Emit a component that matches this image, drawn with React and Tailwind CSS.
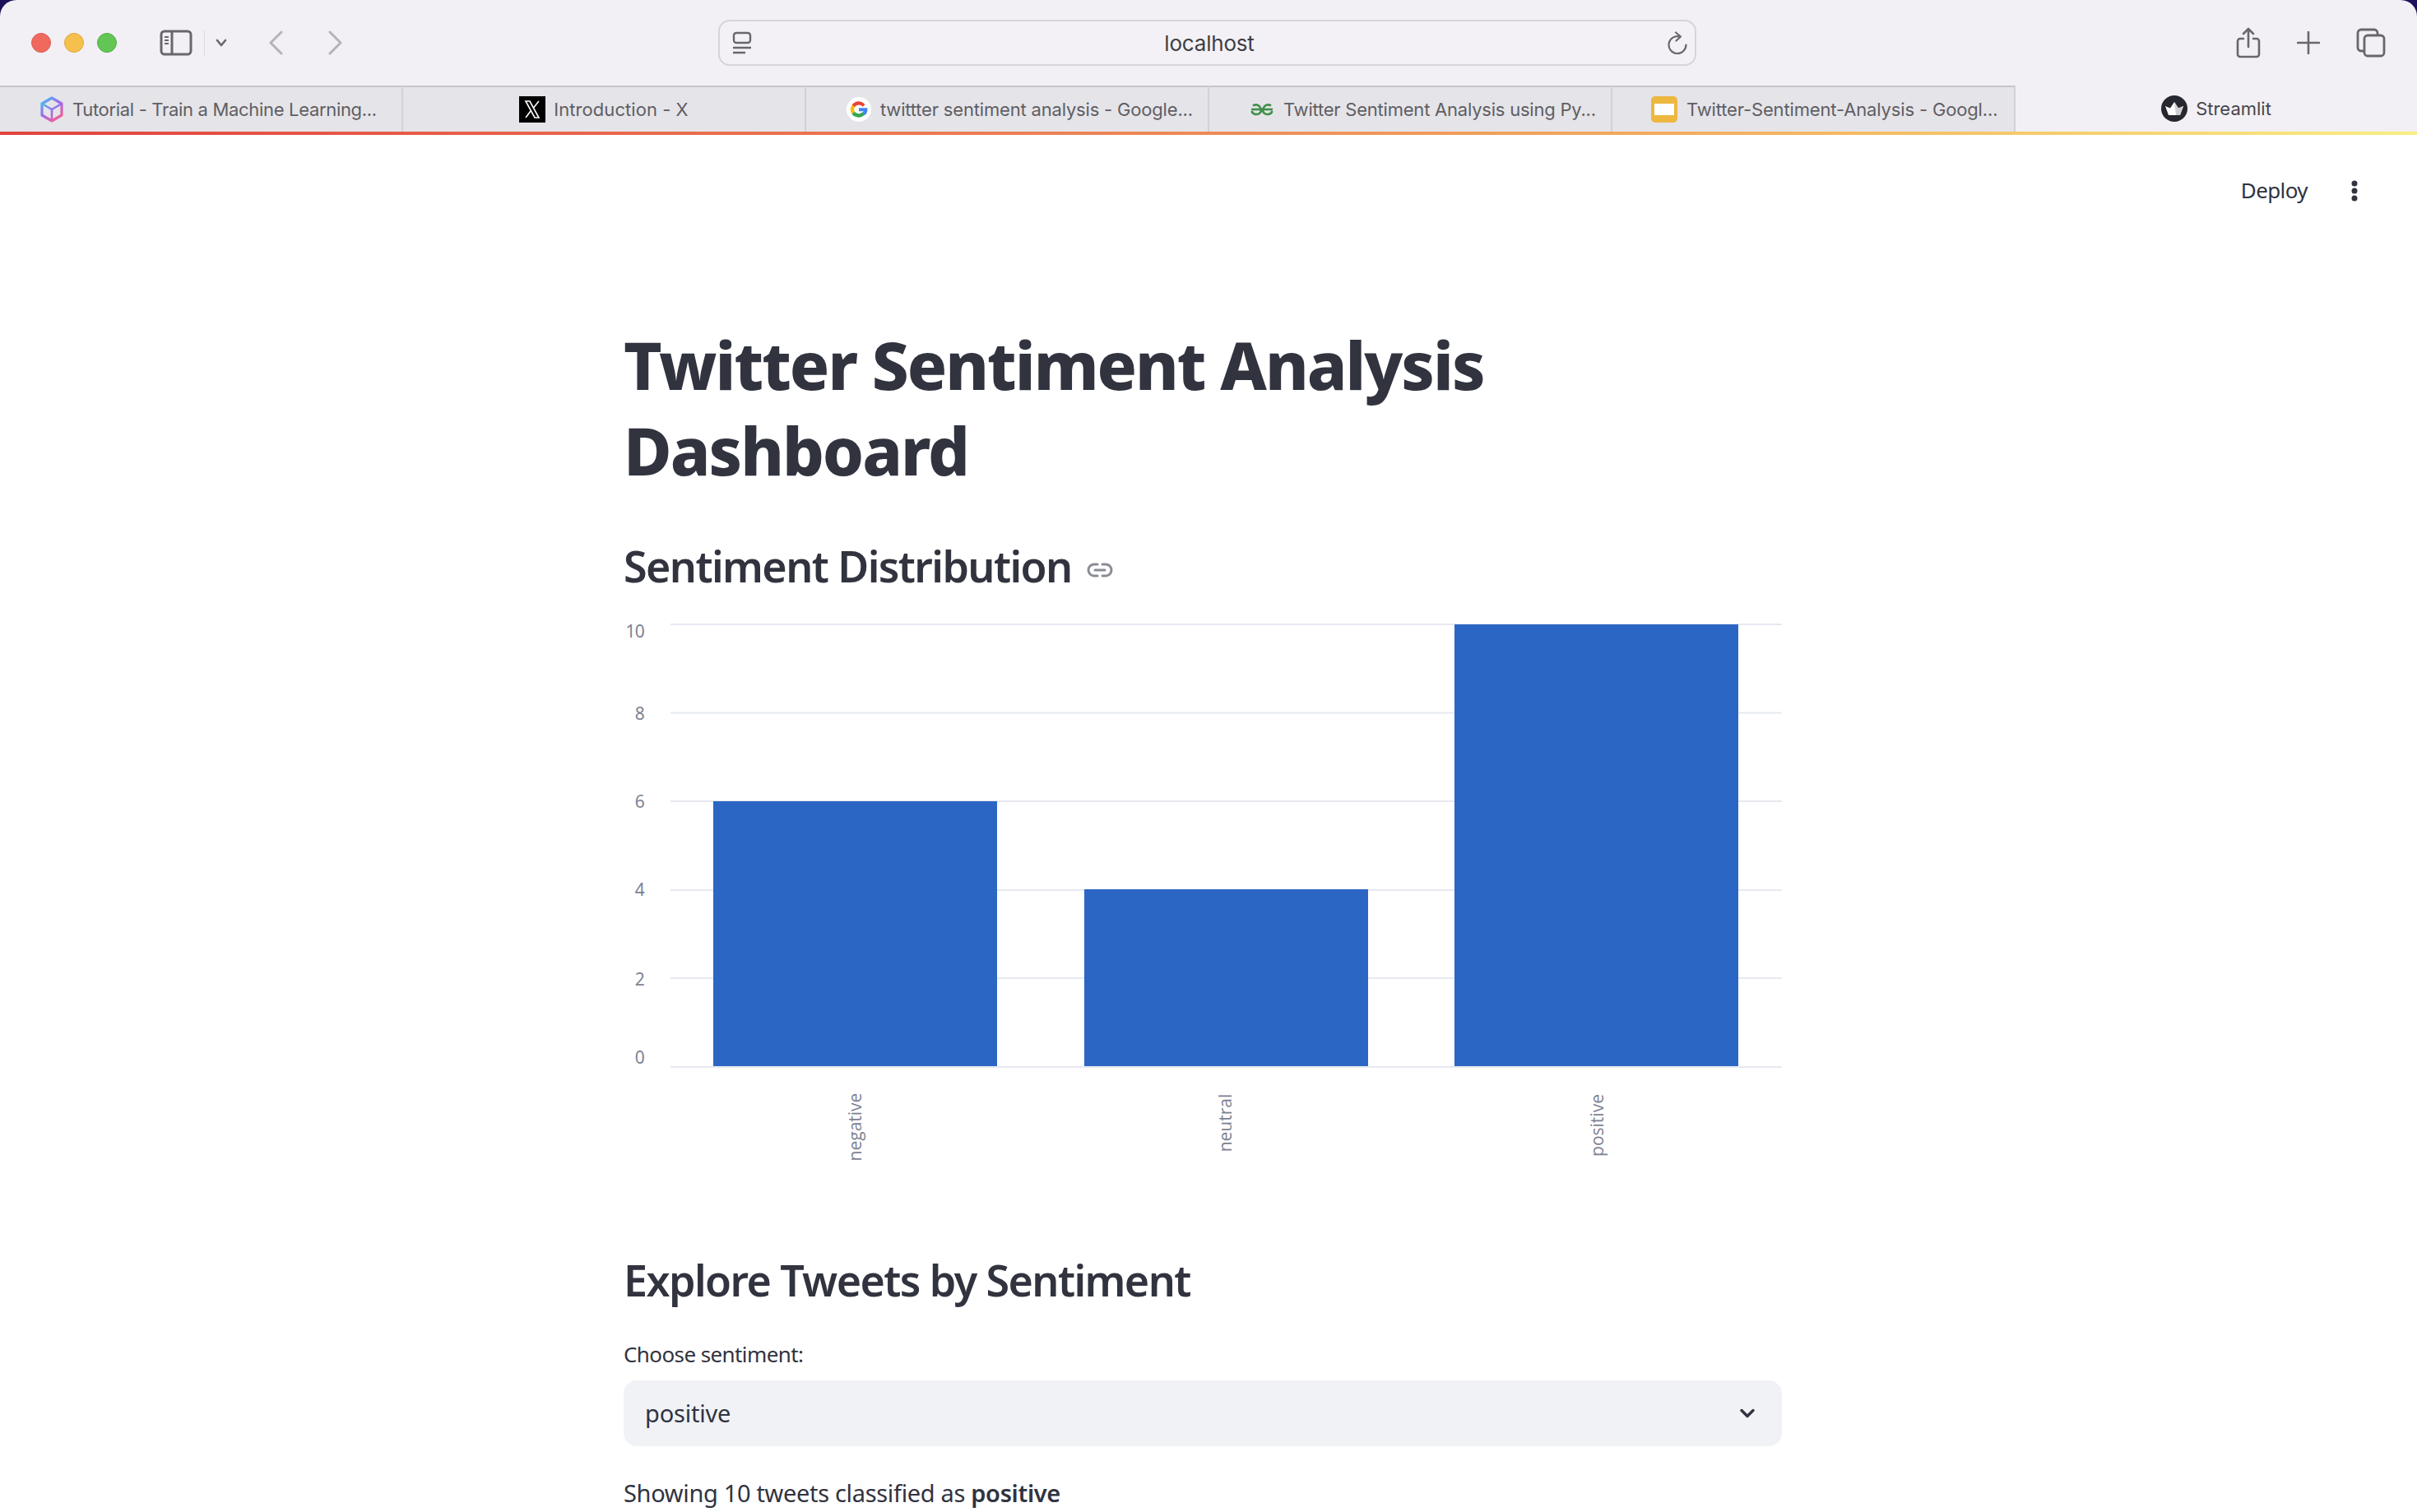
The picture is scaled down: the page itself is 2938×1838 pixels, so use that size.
import { ChevronDown } from 'lucide-react';

const tabs = [
  { title: 'Tutorial - Train a Machine Learning...', icon: 'cube', box: 'justify-start pl-[48px] gap-[10px]', text: 'tracking-[-0.32px]' },
  { title: 'Introduction - X', icon: 'x', box: 'justify-center gap-[10px]', text: 'tracking-[0.05px]' },
  { title: 'twittter sentiment analysis - Google...', icon: 'google', box: 'justify-start pl-[49px] gap-[11px]', text: 'tracking-[-0.18px]' },
  { title: 'Twitter Sentiment Analysis using Py...', icon: 'gfg', box: 'justify-start pl-[49px] gap-[11px]', text: 'tracking-[-0.22px]' },
  { title: 'Twitter-Sentiment-Analysis - Googl...', icon: 'slides', box: 'justify-start pl-[47px] gap-[11px]', text: 'tracking-[-0.15px]' },
];

const Favicon = ({ type }) => {
  if (type === 'cube') {
    return (
      <svg width="30" height="32" viewBox="0 0 30 32" fill="none" strokeWidth="3.200" strokeLinejoin="round">
        <defs>
          <linearGradient id="cubeStroke" x1="0" y1="0" x2="0.7" y2="1">
            <stop offset="0" stopColor="#3fc4ee" />
            <stop offset="0.5" stopColor="#9a6cf0" />
            <stop offset="1" stopColor="#f0609a" />
          </linearGradient>
        </defs>
        <path d="M15 2 27 9v14L15 30 3 23V9Z" stroke="url(#cubeStroke)" />
        <path d="M3 9l12 7 12-7M15 16v14" stroke="url(#cubeStroke)" strokeWidth="2.600" />
      </svg>
    );
  }
  if (type === 'x') {
    return (
      <svg width="32" height="32" viewBox="0 0 32 32">
        <rect width="32" height="32" fill="#000" />
        <path d="M8 6h5l11 20h-5Z" fill="none" stroke="#fff" strokeWidth="1.600" />
        <path d="M24 6 17.500 14M14 18 8 26" stroke="#fff" strokeWidth="1.600" />
      </svg>
    );
  }
  if (type === 'google') {
    return (
      <svg width="30" height="32" viewBox="0 0 32 32">
        <circle cx="16" cy="16" r="16" fill="#fff" />
        <path d="M24 9.500A11 11 0 0 0 7 10l3.500 3A6.500 6.500 0 0 1 21 12.500Z" fill="#ea4335" />
        <path d="M7 10a11 11 0 0 0 0 12l3.500-3a6.500 6.500 0 0 1 0-6Z" fill="#fbbc05" />
        <path d="M7 22a11 11 0 0 0 17 .5L20.500 19.500A6.500 6.500 0 0 1 10.500 19Z" fill="#34a853" />
        <path d="M27 14H16v4.500h6.200a6 6 0 0 1-1.700 2L24 23.500a11 11 0 0 0 3-9.500Z" fill="#4285f4" />
      </svg>
    );
  }
  if (type === 'gfg') {
    return (
      <svg width="30" height="32" viewBox="0 0 30 32" fill="none" stroke="#3f8f49" strokeWidth="2.600">
        <path d="M2 16h26" />
        <path d="M4 11.500a6 6 0 0 1 9 2.500q1 2 1 2 0 6-6 6a6 6 0 0 1-5.500-4" />
        <path d="M26 11.500a6 6 0 0 0-9 2.500q-1 2-1 2 0 6 6 6a6 6 0 0 0 5.500-4" />
      </svg>
    );
  }
  return (
    <svg width="32" height="32" viewBox="0 0 32 32">
      <rect width="32" height="32" rx="5" fill="#ecb83f" />
      <rect x="4" y="9" width="24" height="14" fill="#fff" />
    </svg>
  );
};

const Toolbar = () => (
  <div className="h-[104px] flex items-center bg-[#f2f0f5] rounded-t-[20px] pl-[38px]">
    <div className="flex gap-[16px]">
      <span className="w-[24px] h-[24px] rounded-full bg-[#f0695f] border border-[#dc5a50]" />
      <span className="w-[24px] h-[24px] rounded-full bg-[#f6c04f] border border-[#dfa93c]" />
      <span className="w-[24px] h-[24px] rounded-full bg-[#62c554] border border-[#52ad45]" />
    </div>
    <svg className="ml-[52px]" width="40" height="32" viewBox="0 0 40 32" fill="none" stroke="#68676c" strokeWidth="3">
      <rect x="2" y="2" width="36" height="28" rx="4" />
      <path d="M15 2v28" />
      <path d="M6 9h5M6 13h5M6 17h5" strokeWidth="2" />
    </svg>
    <div className="w-[1px] h-[32px] bg-[#dcdbe0] ml-[14px]" />
    <svg className="ml-[13px]" width="14" height="10" viewBox="0 0 14 10" fill="none" stroke="#68676c" strokeWidth="2.600" strokeLinecap="round" strokeLinejoin="round">
      <path d="M2 2l5 6 5-6" />
    </svg>
    <svg className="ml-[50px]" width="19" height="30" viewBox="0 0 19 30" fill="none" stroke="#b4b3b8" strokeWidth="3" strokeLinecap="round" strokeLinejoin="round">
      <path d="M16 2 3 15l13 13" />
    </svg>
    <svg className="ml-[53px]" width="19" height="30" viewBox="0 0 19 30" fill="none" stroke="#b4b3b8" strokeWidth="3" strokeLinecap="round" strokeLinejoin="round">
      <path d="M3 2l13 13L3 28" />
    </svg>
    <div className="ml-[456px] w-[1189px] h-[56px] rounded-[14px] border-2 border-[#d6d4da] flex items-center justify-between pl-[15px] pr-[8px] bg-[#f3f1f6]">
      <svg width="24" height="28" viewBox="0 0 24 28" fill="none" stroke="#68676c" strokeWidth="2.400">
        <rect x="2" y="2" width="20" height="12" rx="3" />
        <path d="M1 20h22M1 26h15" />
      </svg>
      <span className="font-['Inter',sans-serif] text-[26px] mt-[1px] text-[#3f3e43] tracking-[-0.2px]">localhost</span>
      <svg width="26" height="28" viewBox="0 0 26 28" fill="none" stroke="#68676c" strokeWidth="2.200" strokeLinecap="round" strokeLinejoin="round">
        <path d="M16 6.500A10.500 10.500 0 1 0 23.500 16.500" />
        <path d="M11 1.500 17 6.500 11.500 11.500" />
      </svg>
    </div>
    <svg className="ml-[656px]" width="30" height="38" viewBox="0 0 30 38" fill="none" stroke="#68676c" strokeWidth="2.600" strokeLinecap="round" strokeLinejoin="round">
      <path d="M9 14H5a3 3 0 0 0-3 3v16a3 3 0 0 0 3 3h20a3 3 0 0 0 3-3V17a3 3 0 0 0-3-3h-4" />
      <path d="M15 24V2M9 8l6-6 6 6" />
    </svg>
    <svg className="ml-[44px]" width="28" height="28" viewBox="0 0 28 28" stroke="#68676c" strokeWidth="2.600" strokeLinecap="round">
      <path d="M14 1v26M1 14h26" />
    </svg>
    <svg className="ml-[44px]" width="36" height="36" viewBox="0 0 36 36" fill="none" stroke="#68676c" strokeWidth="2.800" strokeLinejoin="round">
      <path d="M9 28H6a4 4 0 0 1-4-4V6a4 4 0 0 1 4-4h16a4 4 0 0 1 4 4v2" />
      <rect x="10" y="9" width="24" height="25" rx="4" />
    </svg>
  </div>
);

const TabStrip = () => (
  <div className="h-[56px] flex bg-[#f2f0f5] font-['Inter',sans-serif] text-[22px]">
    {tabs.map((t) => (
      <div key={t.title} className={`w-[490px] flex items-center bg-[#e5e4e9] border-t-2 border-t-[#c6c5ca] border-r-2 border-r-[#d2d1d6] text-[#5f5e63] whitespace-nowrap ${t.box}`}>
        <Favicon type={t.icon} />
        <span className={t.text}>{t.title}</span>
      </div>
    ))}
    <div className="flex-1 flex items-center justify-center gap-[10px] text-[#47464b]">
      <svg width="32" height="32" viewBox="0 0 32 32">
        <circle cx="16" cy="16" r="16" fill="#26272f" />
        <path d="M5 13l6 2.500L16 8l5 7.500 6-2.500-4 11H9Z" fill="#fff" />
        <path d="M16 8l5 7.500 6-2.500-4 11h-5Z" fill="#cfcfd2" />
      </svg>
      <span>Streamlit</span>
    </div>
  </div>
);

const Chart = () => {
  const grid = [759, 866.6, 974, 1082, 1189, 1297];
  const yLabels = [['10', 775], ['8', 875], ['6', 982], ['4', 1089], ['2', 1198], ['0', 1293]];
  const bars = [[867, 974], [1318, 1081], [1768, 759]];
  const xLabels = [['negative', 1039, 1370], ['neutral', 1489, 1365], ['positive', 1941, 1368]];

  return (
    <svg className="block" width="1408" height="690" viewBox="758 750 1408 690">
      {grid.map((y) => (
        <rect key={y} x="815" y={y - 1} width="1351" height="2" fill="#e6e9f0" />
      ))}
      {bars.map(([x, y]) => (
        <rect key={x} x={x} y={y} width="345" height={1296 - y} fill="#2b66c4" />
      ))}
      {yLabels.map(([l, y]) => (
        <text key={l} x="783" y={y} textAnchor="end" fontSize="21" fill="#7d8292" fontFamily="'Noto Sans', sans-serif" letterSpacing="-0.8">
          {l}
        </text>
      ))}
      {xLabels.map(([l, x, y]) => (
        <text key={l} x={x} y={y} textAnchor="middle" dominantBaseline="central" fontSize="21" fill="#7d8292" fontFamily="'Open Sans', sans-serif" transform={`rotate(-90 ${x} ${y})`}>
          {l}
        </text>
      ))}
    </svg>
  );
};

export default function App() {
  return (
    <div className="h-[1838px] overflow-hidden bg-[#1d1259] font-['Noto_Sans',sans-serif] text-[#31333f]">
      <Toolbar />
      <TabStrip />
      <div className="h-[4px] bg-[linear-gradient(90deg,#e2433f_0%,#ee8a56_50%,#f5b65f_75%,#f9ee82_100%)]" />
      <main className="bg-white h-[1674px] relative">
        <div className="absolute right-[72px] top-[48px] flex items-center gap-[53px]">
          <span className="text-[26px] tracking-[-0.6px] text-[#31333f]">Deploy</span>
          <svg width="8" height="26" viewBox="0 0 8 26" fill="#31333f">
            <circle cx="4" cy="4" r="3.500" />
            <circle cx="4" cy="13" r="3.500" />
            <circle cx="4" cy="22" r="3.500" />
          </svg>
        </div>

        <div className="w-[1408px] ml-[758px] pt-[227px]">
          <h1 className="text-[80px] leading-[104px] font-extrabold tracking-[-2px]">
            Twitter Sentiment Analysis<br />Dashboard
          </h1>
          <div className="flex items-center gap-[18px] mt-[53px]">
            <h2 className="text-[52px] leading-[72px] font-semibold tracking-[-1.6px]">Sentiment Distribution</h2>
            <svg className="mt-[10px]" width="32" height="18" viewBox="0 0 32 18" fill="none" stroke="#8a8c95" strokeWidth="3" strokeLinecap="round">
              <path d="M13 2H9a7 7 0 0 0 0 14h4M19 2h4a7 7 0 0 1 0 14h-4M10 9h12" />
            </svg>
          </div>
          <div className="mt-[26px]">
            <Chart />
          </div>
          <h2 className="text-[52px] leading-[72px] font-semibold tracking-[-1.6px] mt-[80px]">Explore Tweets by Sentiment</h2>
          <div className="text-[26px] leading-[36px] tracking-[-0.6px] mt-[36px]">Choose sentiment:</div>
          <div className="h-[80px] mt-[14px] bg-[#f0f2f6] rounded-[16px] flex items-center justify-between pl-[26px] pr-[28px]">
            <span className="text-[29px] tracking-[-0.2px]">positive</span>
            <ChevronDown size={28} strokeWidth={3} color="#31333f" />
          </div>
          <p className="text-[29px] leading-[44px] tracking-[-0.33px] mt-[35px]">
            Showing 10 tweets classified as <b className="font-semibold">positive</b>
          </p>
        </div>
      </main>
    </div>
  );
}
